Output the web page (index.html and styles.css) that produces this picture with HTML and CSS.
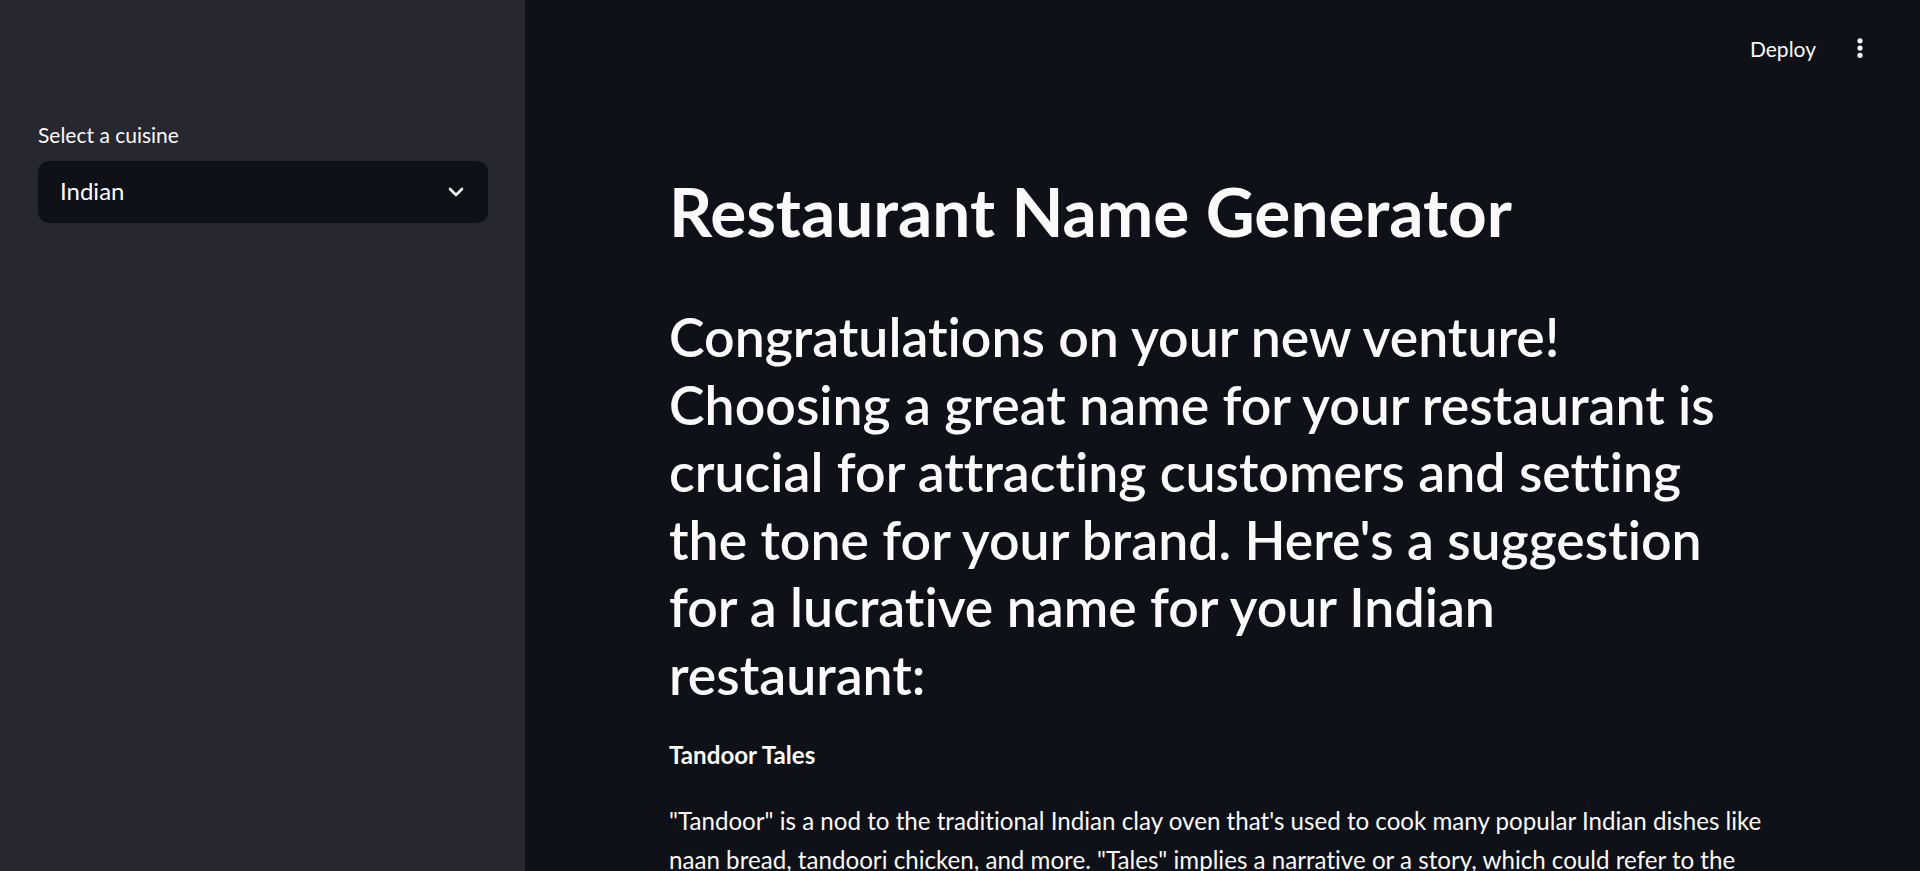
FILE: index.html
```html
<!DOCTYPE html>
<html lang="en">
<head>
<meta charset="utf-8">
<title>Restaurant Name Generator</title>
<link rel="stylesheet" href="styles.css">
</head>
<body>
<div class="app">
  <aside class="sidebar">
    <div class="sidebar-content">
      <label class="widget-label">Select a cuisine</label>
      <div class="select">
        <span class="select-value">Indian</span>
        <svg class="chevron" width="16" height="10" viewBox="0 0 16 10" aria-hidden="true">
          <polyline points="2,2 8,8 14,2" fill="none" stroke="#fafafa" stroke-width="2.6" stroke-linecap="round" stroke-linejoin="round"/>
        </svg>
      </div>
    </div>
  </aside>
  <div class="main">
    <header class="toolbar">
      <button class="deploy">Deploy</button>
      <button class="menu" aria-label="Main menu">
        <svg width="8" height="24" viewBox="0 0 8 24" aria-hidden="true">
          <circle cx="4" cy="4.8" r="2.6" fill="#fafafa"/>
          <circle cx="4" cy="12.1" r="2.6" fill="#fafafa"/>
          <circle cx="4" cy="19.3" r="2.6" fill="#fafafa"/>
        </svg>
      </button>
    </header>
    <section class="block">
      <h1 class="title">Restaurant Name Generator</h1>
      <h2 class="intro">Congratulations on your new venture!<br>Choosing a great name for your restaurant is<br>crucial for attracting customers and setting<br>the tone for your brand. Here's a suggestion<br>for a lucrative name for your Indian<br>restaurant:</h2>
      <p class="name"><strong>Tandoor Tales</strong></p>
      <p class="body-text">"Tandoor" is a nod to the traditional Indian clay oven that's used to cook many popular Indian dishes like naan bread, tandoori chicken, and more. "Tales" implies a narrative or a story, which could refer to the stories behind the recipes, the heritage of Indian cuisine, or the experiences your guests will share around the table.</p>
    </section>
  </div>
</div>
</body>
</html>
```
FILE: styles.css
```css
html, body {
  margin: 0;
  padding: 0;
  height: 100%;
}

body {
  background: #0e1117;
  color: #fafafa;
  font-family: "Lato", "Liberation Sans", sans-serif;
  font-variant-ligatures: no-common-ligatures;
  font-feature-settings: "liga" 0, "clig" 0;
}

.app {
  display: flex;
  height: 100vh;
  overflow: hidden;
}

/* Sidebar */
.sidebar {
  flex: 0 0 525px;
  background: #262730;
}

.sidebar-content {
  padding: 119px 37px 0 38px;
  display: flex;
  flex-direction: column;
}

.widget-label {
  font-size: 21px;
  line-height: 31.5px;
  margin-bottom: 10.5px;
}

.select {
  height: 62px;
  box-sizing: border-box;
  background: #0e1117;
  border-radius: 11px;
  display: flex;
  align-items: center;
  justify-content: space-between;
  padding: 0 24px 0 22px;
}

.select-value {
  font-size: 24px;
  line-height: 1;
  padding-bottom: 3px;
}

.chevron {
  display: block;
}

/* Main area */
.main {
  flex: 1 1 auto;
  display: flex;
  flex-direction: column;
  overflow: hidden;
}

.toolbar {
  height: 96px;
  flex: 0 0 96px;
  display: flex;
  align-items: center;
  justify-content: flex-end;
  gap: 40px;
  padding-right: 56px;
}

.deploy,
.menu {
  background: none;
  border: 0;
  padding: 0;
  margin: 0;
  color: #fafafa;
  font-family: inherit;
  cursor: pointer;
}

.deploy {
  font-size: 21px;
  line-height: 31.5px;
  padding-top: 1px;
}

.menu svg {
  display: block;
}

.block {
  padding: 75px 144px 0 144px;
}

.title {
  margin: 0;
  font-size: 67.5px;
  font-weight: 700;
  line-height: 80px;
}

.intro {
  margin: 52px 0 0 0;
  font-size: 53.6px;
  font-weight: 600;
  line-height: 67.5px;
}

.name,
.body-text {
  margin: 28px 0 0 0;
  font-size: 24.15px;
  line-height: 38.4px;
}

.name strong {
  font-weight: 700;
}
```
